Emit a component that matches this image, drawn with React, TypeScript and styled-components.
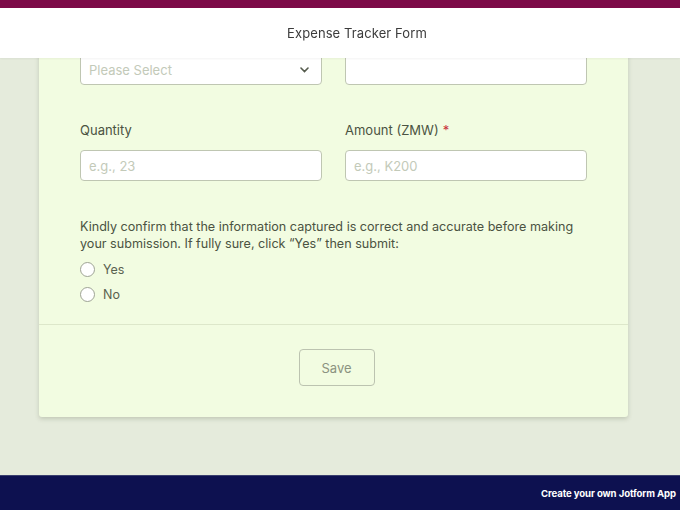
import React from "react";
import styled, { createGlobalStyle } from "styled-components";

const GlobalStyle = createGlobalStyle`
  html, body {
    margin: 0;
    padding: 0;
    height: 510px;
    overflow: hidden;
    background: #e5ebdc;
    font-family: Inter, "Liberation Sans", sans-serif;
  }
  * {
    box-sizing: border-box;
  }
`;

const TopHeader = styled.header`
  position: fixed;
  top: 0;
  left: 0;
  right: 0;
  z-index: 10;
`;

const Stripe = styled.div`
  height: 8px;
  background: #7c0a47;
`;

const TitleBar = styled.div`
  height: 50px;
  background: #ffffff;
  display: flex;
  align-items: center;
  justify-content: center;
  padding-left: 34px;
  color: #3b3b3b;
  font-size: 13px;
  letter-spacing: 0.1px;
  box-shadow: 0 1px 2px rgba(0, 0, 0, 0.05);
`;

const Main = styled.main`
  padding: 20px 52px 0 39px;
`;

const Card = styled.section`
  width: 589px;
  background: #f2fce1;
  border-radius: 3px;
  box-shadow: 0 2px 4px rgba(90, 100, 70, 0.25);
`;

const FormBody = styled.div`
  padding: 34px 41px 20px;
`;

const FieldGrid = styled.div<{ $top?: number }>`
  display: grid;
  grid-template-columns: 242px 242px;
  column-gap: 23px;
  margin-top: ${(p) => p.$top ?? 0}px;
`;

const Field = styled.div`
  display: flex;
  flex-direction: column;
  gap: 12px;
`;

const Label = styled.label`
  font-size: 13px;
  line-height: 16px;
  color: #4b5342;
`;

const Required = styled.span`
  color: #c8323a;
  margin-left: 4px;
`;

const InputBox = styled.div`
  height: 31px;
  background: #ffffff;
  border: 1px solid #bfc6b2;
  border-radius: 4px;
  display: flex;
  align-items: center;
  justify-content: space-between;
  padding: 0 12px 0 8px;
  font-size: 13px;
  color: #c3cab9;
`;

const Question = styled.p`
  margin: 36.5px 0 0;
  font-size: 12.6px;
  line-height: 17px;
  color: #4b5342;
`;

const RadioList = styled.div`
  display: flex;
  flex-direction: column;
  gap: 5px;
  margin-top: 7.5px;
`;

const RadioRow = styled.div`
  height: 20px;
  display: flex;
  align-items: center;
  gap: 8px;
  font-size: 12.5px;
  color: #5a6250;
`;

const RadioCircle = styled.span`
  width: 15px;
  height: 15px;
  border-radius: 50%;
  border: 1.5px solid #9ea394;
  background: #ffffff;
`;

const Divider = styled.hr`
  margin: 0;
  border: none;
  border-top: 1px solid #dde7ca;
`;

const ButtonArea = styled.div`
  display: flex;
  justify-content: center;
  padding: 24px 0 31px 6px;
`;

const SaveButton = styled.button`
  width: 76px;
  height: 37px;
  background: transparent;
  border: 1.5px solid #bcc3b0;
  border-radius: 4px;
  font-family: Inter, "Liberation Sans", sans-serif;
  font-size: 13px;
  color: #8b9380;
`;

const Footer = styled.footer`
  margin-top: 58px;
  height: 35px;
  background: #0d1150;
  border-top: 1px solid #3a3f6e;
  display: flex;
  align-items: center;
  justify-content: flex-end;
  padding-right: 4px;
`;

const FooterText = styled.span`
  color: #ffffff;
  font-size: 9.6px;
  font-weight: 700;
  white-space: nowrap;
  letter-spacing: -0.1px;
`;

const Chevron = () => (
  <svg width="9" height="6" viewBox="0 0 9 6" fill="none">
    <path d="M1 1l3.5 3.5L8 1" stroke="#555b4d" strokeWidth="1.6" strokeLinecap="round" />
  </svg>
);

export default function App() {
  return (
    <>
      <GlobalStyle />
      <TopHeader>
        <Stripe />
        <TitleBar>Expense Tracker Form</TitleBar>
      </TopHeader>
      <Main>
        <Card>
          <FormBody>
            <FieldGrid>
              <InputBox>
                Please Select
                <Chevron />
              </InputBox>
              <InputBox />
            </FieldGrid>
            <FieldGrid $top={37}>
              <Field>
                <Label>Quantity</Label>
                <InputBox>e.g., 23</InputBox>
              </Field>
              <Field>
                <Label>
                  Amount (ZMW)<Required>*</Required>
                </Label>
                <InputBox>e.g., K200</InputBox>
              </Field>
            </FieldGrid>
            <Question>
              Kindly confirm that the information captured is correct and accurate before making
              your submission. If fully sure, click “Yes” then submit:
            </Question>
            <RadioList>
              <RadioRow>
                <RadioCircle />
                Yes
              </RadioRow>
              <RadioRow>
                <RadioCircle />
                No
              </RadioRow>
            </RadioList>
          </FormBody>
          <Divider />
          <ButtonArea>
            <SaveButton>Save</SaveButton>
          </ButtonArea>
        </Card>
      </Main>
      <Footer>
        <FooterText>Create your own Jotform App</FooterText>
      </Footer>
    </>
  );
}
